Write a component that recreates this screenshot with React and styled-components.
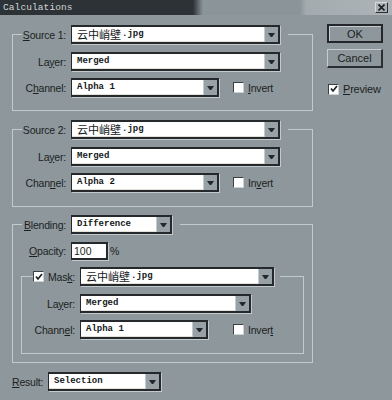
import React from "react";
import styled, { createGlobalStyle } from "styled-components";

const Global = createGlobalStyle`
  html, body { margin: 0; padding: 0; background: #8e979c; }
  #root { width: 392px; height: 400px; }
  * { box-sizing: border-box; }
`;

const Window = styled.div`
  width: 392px;
  height: 400px;
  background: #8e979c;
  font-family: "Liberation Sans", Arial, sans-serif;
  font-size: 10px;
  color: #1b1f22;
  overflow: hidden;
`;

const TitleBar = styled.div`
  height: 15px;
  display: flex;
  align-items: center;
  justify-content: space-between;
  padding: 0 4px 0 3px;
  background: linear-gradient(
    to right,
    #2c3236 0,
    #2c3236 193px,
    #5d6569 198px,
    #8b9499 203px,
    #8b9499 300px,
    #a3abaf 306px,
    #acb4b8 100%
  );
`;

const Title = styled.span`
  font-family: "Liberation Mono", monospace;
  font-size: 9.5px;
  color: #d2d6d8;
  letter-spacing: 0.1px;
`;

const CloseBtn = styled.div`
  width: 13px;
  height: 11px;
  display: flex;
  align-items: center;
  justify-content: center;
  background: #a8b0b4;
  border: 1px solid #2a2f32;
  border-top-color: #d6dcdf;
  border-left-color: #d6dcdf;
`;

const Body = styled.div`
  display: flex;
  gap: 14px;
  padding: 9px 0 0 12px;
`;

const LeftCol = styled.div`
  width: 301px;
  padding-top: 1px;
  display: flex;
  flex-direction: column;
`;

const Group = styled.fieldset`
  margin: ${(p) => p.$margin || "0"};
  padding: ${(p) => p.$pt || 8}px 0 ${(p) => p.$pb || 14}px 0;
  border: 1px solid #c2cace;
  min-inline-size: 0;
  display: flex;
  flex-direction: column;
  gap: 7px;
`;

const Legend = styled.legend`
  margin-left: ${(p) => p.$ml}px;
  padding: 0 ${(p) => p.$pr}px 0 0;
  display: flex;
  align-items: center;
  gap: ${(p) => (p.$gap === undefined ? 5 : p.$gap)}px;
`;

const Row = styled.div`
  display: flex;
  align-items: center;
  gap: ${(p) => (p.$gap === undefined ? 5 : p.$gap)}px;
  margin-bottom: ${(p) => p.$mb || 0}px;
`;

const Label = styled.span`
  width: ${(p) => p.$w}px;
  flex-shrink: 0;
  text-align: ${(p) => (p.$left ? "left" : "right")};
  white-space: nowrap;
  font-size: 10.5px;
  letter-spacing: -0.2px;
`;

const Acc = styled.span`
  text-decoration: underline;
  text-underline-offset: 1px;
`;

const Field = styled.div`
  width: ${(p) => p.$w}px;
  height: 19px;
  flex-shrink: 0;
  display: flex;
  background: #ffffff;
  border: 2px solid #25292c;
  border-left-width: 1px;
  box-shadow: 1px 1px 0 #c3cacd;
`;

const FieldText = styled.div`
  flex: 1;
  display: flex;
  align-items: center;
  padding-left: 5px;
  font-family: "Liberation Mono", monospace;
  font-weight: bold;
  font-size: 9px;
  color: #15181a;
  white-space: nowrap;
  overflow: hidden;
  border-bottom: 1px solid #e4e2d8;
`;

const Cjk = styled.span`
  font-family: "Noto Sans CJK SC", sans-serif;
  font-weight: normal;
  font-size: 11px;
  margin-right: 1px;
`;

const DropBtn = styled.div`
  width: 14px;
  flex-shrink: 0;
  display: flex;
  align-items: center;
  justify-content: center;
  background: #98a1a6;
  border-left: 1px solid #c4cbce;
`;

const Arrow = () => (
  <svg width="7" height="4" viewBox="0 0 7 4">
    <polygon points="0,0 7,0 4.2,4 2.8,4" fill="#23282b" />
  </svg>
);

const Select = ({ w, children }) => (
  <Field $w={w}>
    <FieldText>{children}</FieldText>
    <DropBtn>
      <Arrow />
    </DropBtn>
  </Field>
);

const TextInput = styled.div`
  width: ${(p) => p.$w}px;
  height: 18px;
  flex-shrink: 0;
  display: flex;
  align-items: center;
  padding-left: 2px;
  background: #ffffff;
  border: 2px solid #25292c;
  border-left-width: 1px;
  box-shadow: 1px 1px 0 #c3cacd;
  font-size: 10.5px;
`;

const Box = styled.div`
  width: 11px;
  height: 11px;
  flex-shrink: 0;
  display: flex;
  align-items: center;
  justify-content: center;
  background: #ffffff;
  border: 1px solid #cbd2d5;
  border-top-color: #3b4043;
  border-left-color: #3b4043;
`;

const Check = ({ checked }) => (
  <Box>
    {checked && (
      <svg width="8" height="8" viewBox="0 0 8 8">
        <polyline points="1,3.5 3,6 7,1" fill="none" stroke="#1c2023" strokeWidth="1.7" />
      </svg>
    )}
  </Box>
);

const CheckRow = styled.div`
  display: flex;
  align-items: center;
  gap: ${(p) => (p.$gap === undefined ? 4 : p.$gap)}px;
  margin-left: ${(p) => p.$ml || 0}px;
  font-size: ${(p) => p.$fs || 10.5}px;
  letter-spacing: -0.2px;
`;

const RightCol = styled.div`
  width: 56px;
  display: flex;
  flex-direction: column;
  gap: 6px;
`;

const Button = styled.div`
  height: 19px;
  display: flex;
  align-items: center;
  justify-content: center;
  font-size: 11px;
  color: #1b1f22;
  background: #8e979c;
  border: ${(p) => (p.$default ? "2px solid #23272a" : "2px solid #2a2f32")};
  ${(p) =>
    p.$default
      ? "box-shadow: inset 1px 1px 0 #c6cdd0;"
      : "border-top: 1px solid #c6cdd0; border-left: 1px solid #c6cdd0;"}
`;

const Pct = styled.span`
  font-size: 10.5px;
  margin-left: -1px;
`;

const ResultRow = styled(Row)`
  margin-top: 9px;
`;

export default function App() {
  return (
    <Window>
      <Global />
      <TitleBar>
        <Title>Calculations</Title>
        <CloseBtn>
          <svg width="7" height="7" viewBox="0 0 7 7">
            <path d="M0.5 0.5 L6.5 6.5 M6.5 0.5 L0.5 6.5" stroke="#1c2023" strokeWidth="1.6" />
          </svg>
        </CloseBtn>
      </TitleBar>
      <Body>
        <LeftCol>
          <Group $pb={13}>
            <Legend $ml={9} $pr={8}>
              <Label $w={44}>
                <Acc>S</Acc>ource 1:
              </Label>
              <Select w={209}>
                <Cjk>云中峭壁</Cjk>.jpg
              </Select>
            </Legend>
            <Row>
              <Label $w={53}>
                La<Acc>y</Acc>er:
              </Label>
              <Select w={209}>Merged</Select>
            </Row>
            <Row>
              <Label $w={53}>
                C<Acc>h</Acc>annel:
              </Label>
              <Select w={148}>Alpha 1</Select>
              <CheckRow $ml={9}>
                <Check />
                <span>
                  <Acc>I</Acc>nvert
                </span>
              </CheckRow>
            </Row>
          </Group>

          <Group $margin="9px 0 0 0" $pb={14}>
            <Legend $ml={9} $pr={8}>
              <Label $w={44}>Source 2:</Label>
              <Select w={209}>
                <Cjk>云中峭壁</Cjk>.jpg
              </Select>
            </Legend>
            <Row>
              <Label $w={53}>
                La<Acc>y</Acc>er:
              </Label>
              <Select w={209}>Merged</Select>
            </Row>
            <Row>
              <Label $w={53}>
                Chan<Acc>n</Acc>el:
              </Label>
              <Select w={148}>Alpha 2</Select>
              <CheckRow $ml={9}>
                <Check />
                <span>
                  In<Acc>v</Acc>ert
                </span>
              </CheckRow>
            </Row>
          </Group>

          <Group $margin="8px 0 0 0" $pb={8}>
            <Legend $ml={9} $pr={8}>
              <Label $w={44}>
                <Acc>B</Acc>lending:
              </Label>
              <Select w={101}>Difference</Select>
            </Legend>
            <Row $gap={3}>
              <Label $w={53} style={{ marginRight: 2 }}>
                <Acc>O</Acc>pacity:
              </Label>
              <TextInput $w={37}>100</TextInput>
              <Pct>%</Pct>
            </Row>
            <Group $margin="0 8px" $pb={14}>
              <Legend $ml={11} $pr={6} $gap={1}>
                <CheckRow $gap={4}>
                  <Check checked />
                  <Label $w={31} $left>
                    Mas<Acc>k</Acc>:
                  </Label>
                </CheckRow>
                <Select w={194}>
                  <Cjk>云中峭壁</Cjk>.jpg
                </Select>
              </Legend>
              <Row>
                <Label $w={53}>
                  La<Acc>y</Acc>er:
                </Label>
                <Select w={171}>Merged</Select>
              </Row>
              <Row>
                <Label $w={53}>
                  Chann<Acc>e</Acc>l:
                </Label>
                <Select w={128}>Alpha 1</Select>
                <CheckRow $ml={20}>
                  <Check />
                  <span>
                    Inver<Acc>t</Acc>
                  </span>
                </CheckRow>
              </Row>
            </Group>
          </Group>

          <ResultRow>
            <Label $w={31} $left>
              <Acc>R</Acc>esult:
            </Label>
            <Select w={113}>Selection</Select>
          </ResultRow>
        </LeftCol>

        <RightCol>
          <Button $default>OK</Button>
          <Button>Cancel</Button>
          <CheckRow $ml={1} $fs={11} style={{ marginTop: 9 }}>
            <Check checked />
            <span>
              <Acc>P</Acc>review
            </span>
          </CheckRow>
        </RightCol>
      </Body>
    </Window>
  );
}
